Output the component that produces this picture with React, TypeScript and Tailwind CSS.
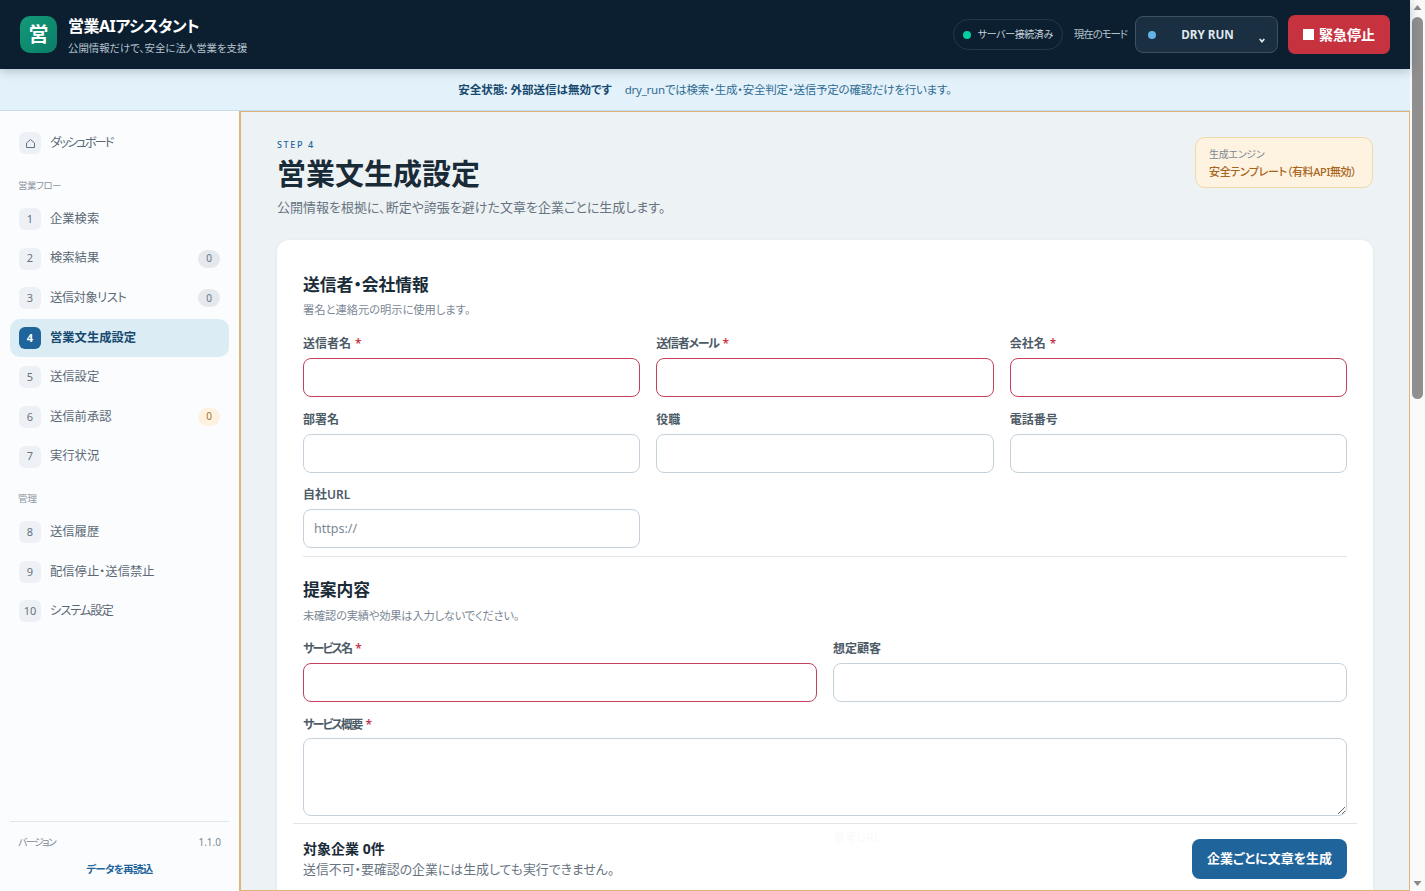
const F = "[font-family:'Noto_Sans','Noto_Sans_CJK_JP',sans-serif] [font-feature-settings:'palt']";

function NavItem({ n, label, badge, tone, active, track }: { n: string; label: string; badge?: string; tone?: string; active?: boolean; track?: string }) {
  return (
    <div className={active ? "mb-[1.6px] flex h-[38px] items-center rounded-[10px] bg-[#dcecf5] pl-[9px] pr-[9px]" : "mb-[1.6px] flex h-[38px] items-center rounded-[10px] pl-[9px] pr-[9px]"}>
      <span className={active ? "flex h-[22px] w-[22px] items-center justify-center rounded-[6px] bg-[#1f659c] text-[11px] font-bold text-white" : "flex h-[22px] w-[22px] items-center justify-center rounded-[6px] bg-[#edf1f5] text-[11px] text-[#66737f]"}>{n}</span>
      <span className={`ml-[9px] flex-1 text-[12.3px] ${active ? "font-semibold text-[#174a70]" : "text-[#5c6975]"} ${track ?? ""}`}>{label}</span>
      {badge && <span className={tone === "amber" ? "flex h-[18px] w-[22px] items-center justify-center rounded-full bg-[#fdf2df] text-[10px] text-[#a8742f]" : "flex h-[18px] w-[22px] items-center justify-center rounded-full bg-[#e5e9ee] text-[10px] text-[#66737f]"}>{badge}</span>}
    </div>
  );
}

function Field({ label, req, ph, track }: { label: string; req?: boolean; ph?: string; track?: string }) {
  return (
    <div>
      <div className="mb-[6px] h-[17px] text-[12px] font-semibold leading-[17px] text-[#4d5b67]">
        <span className={track ?? ""}>{label}</span>{req && <span className="ml-[4px] text-[#c8374a]">*</span>}
      </div>
      <input
        placeholder={ph}
        className={req
          ? "block h-[39px] w-full rounded-[8px] border border-[#c5405a] bg-white px-[10px] text-[12.5px] outline-none placeholder:text-[#7b8794]"
          : "block h-[39px] w-full rounded-[8px] border border-[#c5d1da] bg-white px-[10px] text-[12.5px] outline-none placeholder:text-[#7b8794]"}
      />
    </div>
  );
}

export default function App() {
  return (
    <div className={`flex h-screen w-full overflow-hidden ${F}`}>
      <div className="flex min-w-0 flex-1 flex-col">
        <header className="z-10 flex h-[69px] shrink-0 items-center bg-[#0b1f30] pl-5 pr-5 shadow-[0_2px_10px_rgba(11,31,48,0.24)]">
          <div className="flex h-[37px] w-[37px] items-center justify-center rounded-[10px] bg-gradient-to-br from-[#149a78] to-[#0b7d68] text-[20px] font-bold text-white">営</div>
          <div className="ml-[11px] mt-[2px]">
            <div className="text-[16px] font-bold leading-[22px] tracking-[-0.5px] text-white">営業AIアシスタント</div>
            <div className="mt-[3px] text-[10.4px] leading-[16px] text-[#b6c3ce]">公開情報だけで、安全に法人営業を支援</div>
          </div>
          <div className="ml-auto flex items-center">
            <div className="flex h-[31px] items-center rounded-full border border-[#24384a] pl-[9px] pr-[9px] text-[10px] tracking-[-0.4px] text-[#c9d3dc]">
              <span className="mr-[7px] h-2 w-2 rounded-full bg-[#00d0a4]" />サーバー接続済み
            </div>
            <span className="ml-[11px] text-[10.5px] tracking-[-1.1px] text-[#b6c3ce]">現在のモード</span>
            <div className="ml-[8px] flex h-[37px] w-[143px] items-center rounded-[8px] border border-[#3c5162] bg-[#1a2f41] pl-[12px] pr-[12px]">
              <span className="h-2 w-2 rounded-full bg-[#62b3e6]" />
              <span className="flex-1 text-center text-[11.7px] font-bold text-[#dfe6ec]">DRY RUN</span>
              <svg width="6" height="5" viewBox="0 0 6 5" className="mt-[11px]"><path d="M0.7 1 3 3.6 5.3 1" fill="none" stroke="#dfe6ec" strokeWidth="1.7" /></svg>
            </div>
            <button className="ml-[10px] flex h-[39px] w-[102px] items-center justify-center rounded-[7px] bg-[#c7323f] text-[14px] font-bold text-white">
              <span className="mr-[5px] h-[11px] w-[11px] bg-white" />緊急停止
            </button>
          </div>
        </header>
        <div className="flex h-[42px] shrink-0 items-center justify-center border-b border-[#c5dbe8] bg-[#e3f1fa] text-[11.5px] text-[#2f6c92]">
          <span className="font-bold text-[#16496f]">安全状態: 外部送信は無効です</span>
          <span className="ml-[13px] tracking-[-0.22px]">dry_runでは検索・生成・安全判定・送信予定の確認だけを行います。</span>
        </div>
        <div className="flex min-h-0 flex-1">
          <aside className="flex w-[239px] shrink-0 flex-col bg-[#fafcfe] px-[10px] pb-[14px] pt-[13px]">
            <div className="flex h-[38px] items-center pl-[9px]">
              <span className="flex h-[22px] w-[22px] items-center justify-center rounded-[6px] bg-[#edf1f5]">
                <svg width="11" height="11" viewBox="0 0 11 11"><path d="M1.5 5 5.5 1.5 9.5 5V9.5H1.5Z" fill="none" stroke="#66737f" strokeWidth="1" /></svg>
              </span>
              <span className="ml-[9px] text-[12.3px] tracking-[-2px] text-[#5c6975]">ダッシュボード</span>
            </div>
            <div className="mb-[7px] mt-[17px] pl-[8px] text-[9.5px] leading-[14px] tracking-[-0.5px] text-[#8a95a0]">営業フロー</div>
            <NavItem n="1" label="企業検索" />
            <NavItem n="2" label="検索結果" badge="0" />
            <NavItem n="3" label="送信対象リスト" badge="0" track="tracking-[-0.5px]" />
            <NavItem n="4" label="営業文生成設定" active />
            <NavItem n="5" label="送信設定" />
            <NavItem n="6" label="送信前承認" badge="0" tone="amber" />
            <NavItem n="7" label="実行状況" />
            <div className="mb-[7px] mt-[15px] pl-[8px] text-[9.5px] leading-[14px] text-[#8a95a0]">管理</div>
            <NavItem n="8" label="送信履歴" />
            <NavItem n="9" label="配信停止・送信禁止" />
            <NavItem n="10" label="システム設定" track="tracking-[-1.1px]" />
            <div className="mt-auto border-t border-[#e1e6eb] px-[8px] pt-[12px]">
              <div className="flex items-center justify-between text-[10px] leading-[16px] text-[#7b8794]"><span className="tracking-[-1.6px]">バージョン</span><span>1.1.0</span></div>
              <div className="mt-[11px] text-center text-[10.5px] font-semibold leading-[16px] tracking-[-0.7px] text-[#1f659c]">データを再読込</div>
            </div>
          </aside>
          <main className="relative min-w-0 flex-1 overflow-hidden border border-l-2 border-[#dcb47c] bg-[#edf2f5] pl-[36px] pr-[36px] pt-[24px]">
            <div className="flex items-start justify-between">
              <div>
                <div className="text-[9px] font-medium leading-[18px] tracking-[0.18em] text-[#1f659c]">STEP 4</div>
                <h1 className="mt-[1px] text-[29px] font-bold leading-[38px] text-[#1a2b38]">営業文生成設定</h1>
                <p className="mt-[5px] text-[13px] leading-[18px] text-[#67747f]">公開情報を根拠に、断定や誇張を避けた文章を企業ごとに生成します。</p>
              </div>
              <div className="mt-[1px] h-[51px] w-[178px] shrink-0 rounded-[10px] border border-[#f0d8a8] bg-[#fef3e0] px-[13px] py-[8px]">
                <div className="text-[10px] leading-[17px] tracking-[-0.3px] text-[#7b8794]">生成エンジン</div>
                <div className="whitespace-nowrap text-[11px] font-medium leading-[17px] tracking-[-0.35px] text-[#a8641c]">安全テンプレート（有料API無効）</div>
              </div>
            </div>
            <div className="mt-[24px] rounded-[12px] bg-white px-[26px] pb-[40px] pt-[35px] shadow-[0_1px_4px_rgba(20,40,60,0.06)]">
              <h2 className="text-[16.8px] font-bold leading-[20px] text-[#1a2b38]">送信者・会社情報</h2>
              <p className="mt-[7px] text-[11.25px] leading-[15px] text-[#7b8794]">署名と連絡元の明示に使用します。</p>
              <div className="mt-[18px] grid grid-cols-3 gap-x-4 gap-y-[13.5px]">
                <Field label="送信者名" req />
                <Field label="送信者メール" req track="tracking-[-1.3px]" />
                <Field label="会社名" req />
                <Field label="部署名" />
                <Field label="役職" />
                <Field label="電話番号" />
                <Field label="自社URL" ph="https://" />
              </div>
              <hr className="mt-[8px] border-[#e1e6eb]" />
              <h2 className="mt-[23px] text-[16.8px] font-bold leading-[20px] text-[#1a2b38]">提案内容</h2>
              <p className="mt-[8px] text-[11.25px] leading-[15px] tracking-[-0.2px] text-[#7b8794]">未確認の実績や効果は入力しないでください。</p>
              <div className="mt-[17px] grid grid-cols-2 gap-x-4">
                <Field label="サービス名" req track="tracking-[-1.8px]" />
                <Field label="想定顧客" />
              </div>
              <div className="mt-[14px]">
                <div className="mb-[5px] h-[17px] text-[12px] font-semibold leading-[17px] text-[#4d5b67]"><span className="tracking-[-1.8px]">サービス概要</span><span className="ml-[4px] text-[#c8374a]">*</span></div>
                <textarea className="block h-[78px] w-full rounded-[8px] border border-[#c5d1da] bg-white px-[10px] py-2 text-[12.5px] outline-none" />
              </div>
              <div className="mt-[13px] grid grid-cols-2 gap-x-4">
                <div />
                <Field label="参考URL" />
              </div>
            </div>
            <div className="absolute bottom-0 left-[52px] right-[52px] flex h-[67px] items-center justify-between border-t border-[#e1e6eb] bg-white/97 px-[10px] pt-[3px]">
              <div>
                <div className="text-[14px] font-bold leading-[20px] text-[#1a2b38]">対象企業 0件</div>
                <div className="text-[12.9px] leading-[20px] text-[#67747f]">送信不可・要確認の企業には生成しても実行できません。</div>
              </div>
              <button className="h-[40px] w-[155px] rounded-[8px] bg-[#1f659c] text-[13px] font-bold text-white">企業ごとに文章を生成</button>
            </div>
          </main>
        </div>
      </div>
      <div className="flex w-[15px] shrink-0 flex-col items-center bg-[#fafafa]">
        <svg width="15" height="17" viewBox="0 0 15 17" className="shrink-0"><path d="M7.5 5 11.5 10H3.5Z" fill="#8a8a8a" /></svg>
        <div className="h-[382px] w-[11px] shrink-0 rounded-full bg-[#8f8f8f]" />
        <div className="flex-1" />
        <svg width="15" height="17" viewBox="0 0 15 17" className="shrink-0"><path d="M7.5 12 11.5 7H3.5Z" fill="#8a8a8a" /></svg>
      </div>
    </div>
  );
}
